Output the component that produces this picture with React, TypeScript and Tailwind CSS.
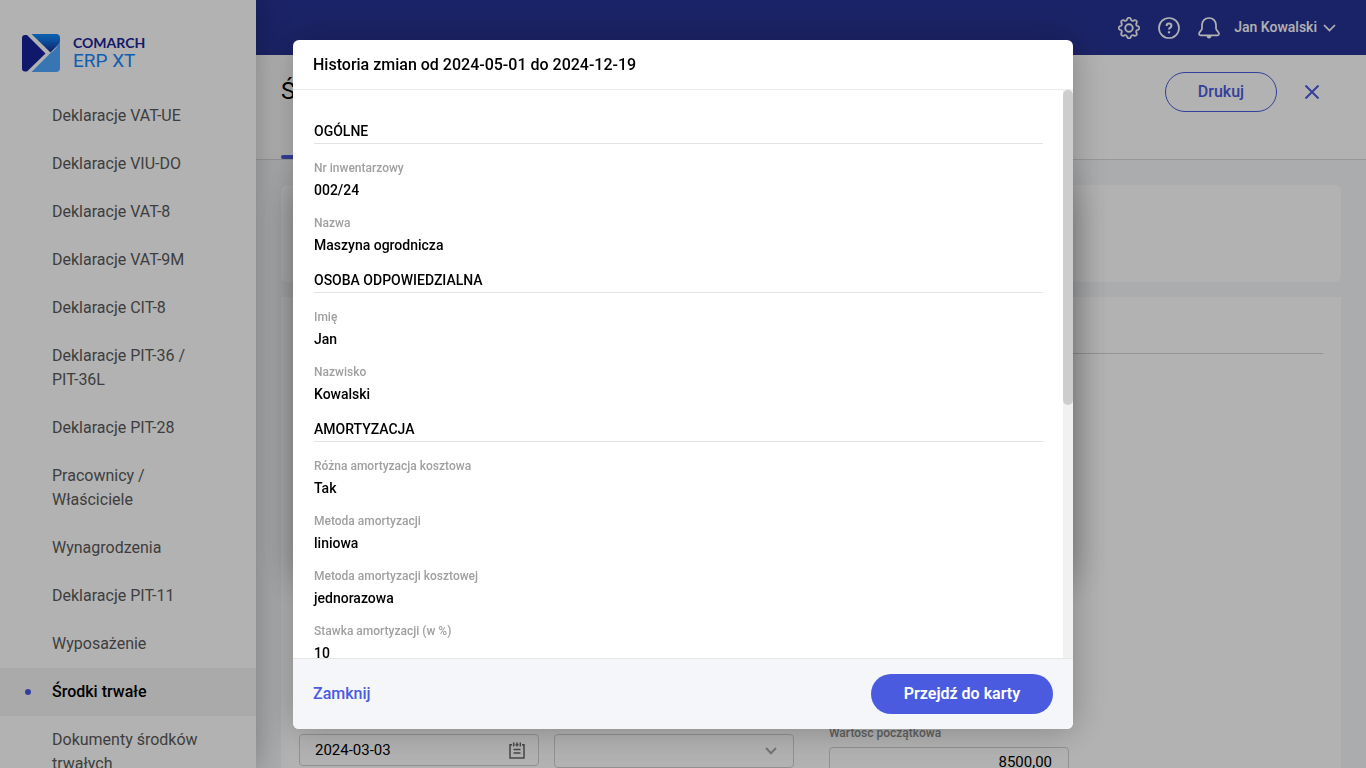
import { BsGear } from "react-icons/bs";

type Field = { label: string; value: string };
type Section = { title: string; fields: Field[] };

const navItems = [
  "Deklaracje VAT-UE",
  "Deklaracje VIU-DO",
  "Deklaracje VAT-8",
  "Deklaracje VAT-9M",
  "Deklaracje CIT-8",
  "Deklaracje PIT-36 / PIT-36L",
  "Deklaracje PIT-28",
  "Pracownicy / Właściciele",
  "Wynagrodzenia",
  "Deklaracje PIT-11",
  "Wyposażenie",
  "Środki trwałe",
  "Dokumenty środków trwałych",
];

const sections: Section[] = [
  {
    title: "OGÓLNE",
    fields: [
      { label: "Nr inwentarzowy", value: "002/24" },
      { label: "Nazwa", value: "Maszyna ogrodnicza" },
    ],
  },
  {
    title: "OSOBA ODPOWIEDZIALNA",
    fields: [
      { label: "Imię", value: "Jan" },
      { label: "Nazwisko", value: "Kowalski" },
    ],
  },
  {
    title: "AMORTYZACJA",
    fields: [
      { label: "Różna amortyzacja kosztowa", value: "Tak" },
      { label: "Metoda amortyzacji", value: "liniowa" },
      { label: "Metoda amortyzacji kosztowej", value: "jednorazowa" },
      { label: "Stawka amortyzacji (w %)", value: "10" },
    ],
  },
];

function Logo() {
  return (
    <div className="flex h-[92px] shrink-0 items-center gap-3 pt-[13px] pl-[22px]">
      <svg width="38" height="38" viewBox="0 0 38 38" aria-hidden="true">
        <defs>
          <linearGradient id="fold" x1="0" y1="0" x2="0" y2="1">
            <stop offset="0" stopColor="#1489ff" />
            <stop offset="0.3" stopColor="#1479e6" />
            <stop offset="1" stopColor="#142d9c" />
          </linearGradient>
        </defs>
        <path d="M3 1H5L23.500 19.500L5 37.500H3Q0 37.500 0 34.500V4Q0 1 3 1Z" fill="#18239a" />
        <path d="M9.500 0H34Q38 0 38 4V9L28.500 18.500Z" fill="url(#fold)" />
        <path d="M38 7V34Q38 38 34 38H9.500L28 19.500Q35 15 38 7Z" fill="#4fa9ff" />
      </svg>
      <div className="flex flex-col pl-px">
        <span className="font-['Lato',sans-serif] text-sm leading-4 font-bold text-[#1a2497]">COMARCH</span>
        <span className="text-[19px] leading-5 text-[#1588ff]">ERP XT</span>
      </div>
    </div>
  );
}

function Sidebar() {
  return (
    <aside className="z-10 flex w-64 shrink-0 flex-col overflow-hidden bg-white shadow-[0_0_30px_rgba(0,0,0,0.3)]">
      <Logo />
      <nav className="min-h-0 flex-1 overflow-hidden">
        {navItems.map((item) => {
          const active = item === "Środki trwałe";
          return (
            <a
              key={item}
              href="#"
              className={
                active
                  ? "flex items-center bg-[#f4f4f4] py-3 pr-14 pl-[25px] text-base font-medium text-black"
                  : "flex items-center py-3 pr-14 pl-[25px] text-base text-[#5a5a5a]"
              }
            >
              <span className={active ? "mr-[21px] size-1.5 shrink-0 rounded-full bg-[#4a5be0]" : "mr-[21px] size-1.5 shrink-0"} />
              <span>{item}</span>
            </a>
          );
        })}
      </nav>
    </aside>
  );
}

function TopBar() {
  return (
    <header className="flex h-[55px] shrink-0 items-center justify-end bg-[#283395] pr-[30px] text-white">
      <div className="flex items-center gap-[18px]">
        <button type="button" aria-label="Ustawienia">
          <BsGear size={22} stroke="currentColor" strokeWidth={0.3} />
        </button>
        <button type="button" aria-label="Pomoc">
          <svg width="22" height="22" viewBox="0 0 22 22" fill="none" stroke="currentColor" strokeWidth="1.700" aria-hidden="true">
            <circle cx="11" cy="11" r="10" />
            <path d="M8.600 9Q8.600 6.600 11 6.600T13.400 8.700Q13.400 10 12.200 10.700T11 12.600" strokeWidth="2" />
            <path d="M11 14.300V16.300" strokeWidth="2.200" />
          </svg>
        </button>
        <button type="button" aria-label="Powiadomienia">
          <svg width="22" height="22" viewBox="0 0 22 22" fill="none" stroke="currentColor" strokeWidth="1.700" strokeLinejoin="round" aria-hidden="true">
            <path d="M11 1C6.600 1 4 4.200 4 8V11.500C4 13.500 1 14.800 1 16.800Q1 18.300 2.600 18.300H19.400Q21 18.300 21 16.800C21 14.800 18 13.500 18 11.500V8C18 4.200 15.400 1 11 1Z" />
            <path d="M8.500 19H13.500Q13 21.500 11 21.500T8.500 19Z" fill="currentColor" stroke="none" />
          </svg>
        </button>
      </div>
      <button type="button" className="ml-3.5 flex items-center gap-1.5 pb-0.5 text-sm font-medium">
        Jan Kowalski
        <svg width="13" height="8" viewBox="0 0 13 8" fill="none" stroke="currentColor" strokeWidth="1.700" className="mt-0.5" aria-hidden="true">
          <path d="M1 1L6.500 6.500L12 1" />
        </svg>
      </button>
    </header>
  );
}

function PageHeader() {
  return (
    <div className="flex h-[105px] shrink-0 flex-col justify-between border-b border-[#dadada] bg-white pl-[25px]">
      <div className="flex items-center justify-between pt-[17px] pr-[47px]">
        <h1 className="pb-0.5 text-2xl leading-9 text-black">Środek trwały</h1>
        <div className="flex items-center gap-7">
          <button type="button" className="h-10 w-28 rounded-full border border-[#4a5be0] text-base font-medium text-[#4a5be0]">
            Drukuj
          </button>
          <button type="button" aria-label="Zamknij kartę" className="text-[#4a5be0]">
            <svg width="14" height="14" viewBox="0 0 14 14" fill="none" stroke="currentColor" strokeWidth="2" aria-hidden="true">
              <path d="M0.500 0.500L13.500 13.500M13.500 0.500L0.500 13.500" />
            </svg>
          </button>
        </div>
      </div>
      <div className="h-1 w-24 rounded-sm bg-[#4a5be0]" />
    </div>
  );
}

function AssetForm() {
  return (
    <div className="flex min-h-0 flex-1 flex-col gap-[15px] overflow-hidden bg-[#f4f6f8] px-[25px] pt-[25px]">
      <div className="h-[97px] shrink-0 rounded-md bg-white" />
      <form className="flex h-[600px] shrink-0 flex-col bg-white px-[18px]">
        <div className="h-[57px] shrink-0 border-b border-[#d4d4d4]" />
        <div className="flex items-start pt-[371px]">
          <div className="mt-[9px] flex h-8 w-60 items-center rounded border border-[#d0d0d0] pr-[13px] pl-[15px]">
            <input aria-label="Data" defaultValue="2024-03-03" className="min-w-0 flex-1 bg-transparent text-[15px] text-black outline-none" />
            <svg width="16" height="17" viewBox="0 0 16 17" fill="none" stroke="#666" strokeWidth="1.500" aria-hidden="true">
              <path d="M3 2.700H1V16H15V2.700H13M6.500 2.700H9.500M4.700 0.500V4.500M8 0.500V4.500M11.300 0.500V4.500M4.500 7.500H11.500M4.500 11H11.500" />
            </svg>
          </div>
          <div className="mt-[9px] ml-[15px] grid h-[34px] w-60 grid-cols-[1fr_auto] items-center rounded border border-[#d0d0d0] pr-4">
            <select aria-label="Rodzaj" className="h-full w-full appearance-none bg-transparent outline-none">
              <option></option>
            </select>
            <svg width="12" height="8" viewBox="0 0 12 8" fill="none" stroke="#aaa" strokeWidth="2" aria-hidden="true">
              <path d="M1 1L6 6.300L11 1" />
            </svg>
          </div>
          <div className="ml-[35px] flex w-60 flex-col">
            <label htmlFor="wartosc" className="h-[22px] text-xs leading-4 font-medium text-[#8a8a8a]">
              Wartość początkowa
            </label>
            <input
              id="wartosc"
              defaultValue="8500,00"
              className="h-8 w-full rounded border border-[#d0d0d0] bg-transparent px-4 pb-0.5 text-right text-[15px] text-black outline-none"
            />
          </div>
        </div>
      </form>
    </div>
  );
}

function HistoryDialog() {
  return (
    <div className="fixed inset-0 z-20 flex justify-center bg-black/30 pt-10 pb-[39px]">
      {/* lower dialog of the stack, covered by the one on top */}
      <div className="absolute top-1/2 left-1/2 h-[390px] w-[780px] max-w-full -translate-1/2 rounded-md bg-white shadow-[0_0_36px_rgba(0,0,0,0.28)]" />
      <div
        role="dialog"
        aria-modal="true"
        aria-labelledby="history-title"
        className="relative flex w-[780px] max-w-full flex-col overflow-hidden rounded-md bg-white shadow-[0_0_36px_rgba(0,0,0,0.28)]"
      >
        <div className="flex h-[50px] shrink-0 items-center border-b border-[#ececec] px-5">
          <h2 id="history-title" className="text-base font-medium text-black">
            Historia zmian od 2024-05-01 do 2024-12-19
          </h2>
        </div>
        <div className="flex min-h-0 flex-1">
          <div className="min-w-0 flex-1 overflow-y-auto pt-[31px] pr-5 pb-5 pl-[21px] [scrollbar-width:none]">
            {sections.map((section) => (
              <section key={section.title}>
                <h3 className="mb-4 border-b border-[#e2e2e2] pb-0.5 text-sm font-medium text-black">{section.title}</h3>
                <dl>
                  {section.fields.map((field) => (
                    <div key={field.label} className="pb-[15px]">
                      <dt className="text-xs font-medium text-[#a0a0a0]">{field.label}</dt>
                      <dd className="mt-1 text-sm font-medium text-black">{field.value}</dd>
                    </div>
                  ))}
                </dl>
              </section>
            ))}
          </div>
          <div className="w-2.5 shrink-0 bg-[#f1f1f1]" aria-hidden="true">
            <div className="h-[55.5%] rounded-full bg-[#cdcdcd]" />
          </div>
        </div>
        <div className="flex h-[71px] shrink-0 items-center justify-between border-t border-[#e6e6e6] bg-[#f4f6f9] px-5">
          <button type="button" className="text-base font-medium text-[#4a5be0]">
            Zamknij
          </button>
          <button type="button" className="h-10 w-[182px] rounded-full bg-[#4a5be0] text-base font-semibold text-white">
            Przejdź do karty
          </button>
        </div>
      </div>
    </div>
  );
}

export default function App() {
  return (
    <div className="flex h-screen overflow-hidden bg-[#f4f6f8] font-['Roboto',sans-serif]">
      <Sidebar />
      <main className="flex min-w-0 flex-1 flex-col">
        <TopBar />
        <PageHeader />
        <AssetForm />
      </main>
      <HistoryDialog />
    </div>
  );
}
